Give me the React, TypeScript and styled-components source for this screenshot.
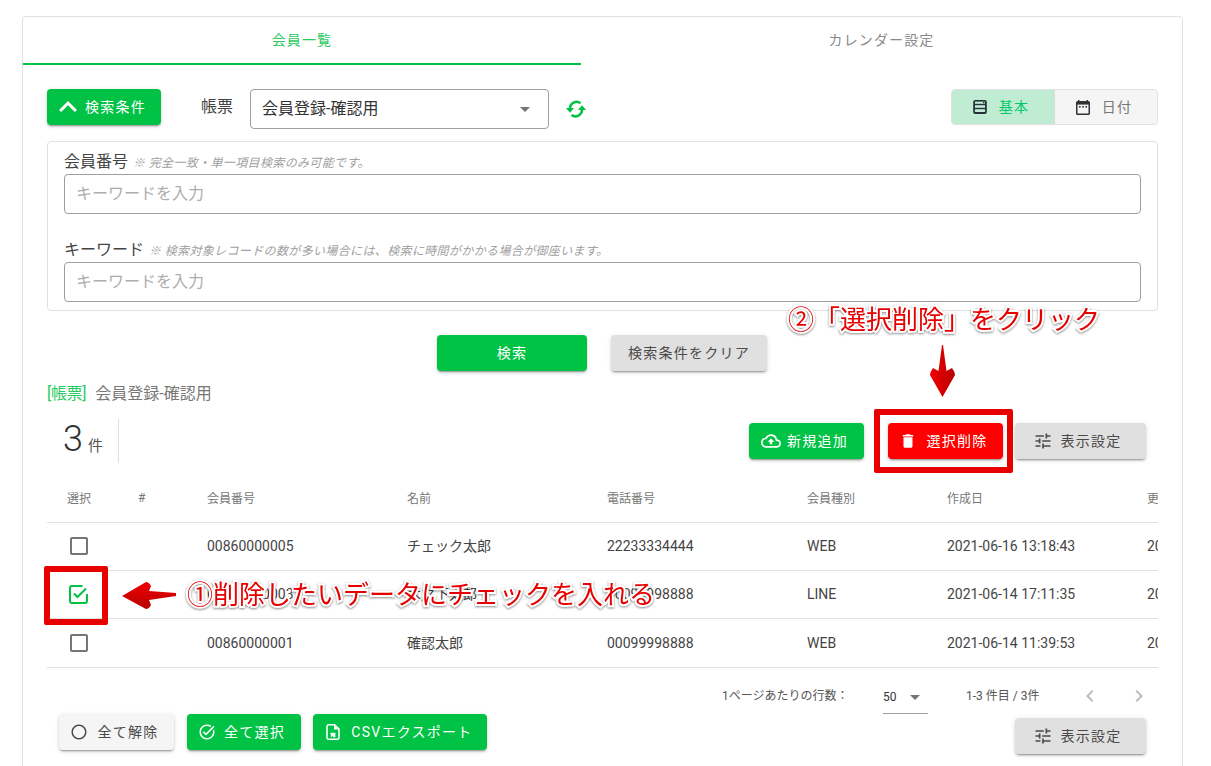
import React from "react";
import styled, { createGlobalStyle } from "styled-components";
import {
  MdKeyboardArrowUp,
  MdArrowDropDown,
  MdOutlineCloudUpload,
  MdDelete,
  MdTune,
  MdCheckBoxOutlineBlank,
  MdChevronLeft,
  MdChevronRight,
  MdRadioButtonUnchecked,
  MdTaskAlt,
} from "react-icons/md";

const GREEN = "#00c245";
const FONT = `Roboto, "Noto Sans CJK JP", sans-serif`;

const Global = createGlobalStyle`
  html, body { margin: 0; padding: 0; background: #fff; overflow: hidden; }
  * { box-sizing: border-box; }
  body { font-family: ${FONT}; color: #333; }
`;

const Page = styled.div`
  position: relative;
  width: 1211px;
  height: 766px;
  overflow: hidden;
  padding: 16px 29px 0 22px;
`;
const Card = styled.div`
  width: 1161px;
  border: 1px solid #e0e0e0;
  border-radius: 4px;
  padding-bottom: 24px;
`;
const Tabs = styled.div`
  display: flex;
  height: 48px;
`;
const Tab = styled.div<{ $active?: boolean; $w: number }>`
  width: ${(p) => p.$w}px;
  display: flex;
  align-items: center;
  justify-content: center;
  padding-bottom: 2px;
  font-size: 14px;
  letter-spacing: 0.08em;
  color: ${(p) => (p.$active ? "#2bca62" : "#8a8a8a")};
  border-bottom: 2px solid ${(p) => (p.$active ? GREEN : "transparent")};
`;
const Content = styled.div`
  padding: 24px 24px 0 24px;
`;
const TopRow = styled.div`
  display: flex;
  align-items: flex-start;
  height: 40px;
`;
const Btn = styled.div<{
  $w: number;
  $v?: "green" | "red" | "grey" | "light";
  $gap?: number;
  $pr?: number;
}>`
  width: ${(p) => p.$w}px;
  height: 36px;
  flex: none;
  display: flex;
  align-items: center;
  justify-content: center;
  gap: ${(p) => p.$gap ?? 8}px;
  padding: 0 ${(p) => p.$pr ?? 0}px 2px 0;
  border-radius: 4px;
  font-size: 14px;
  letter-spacing: 0.09em;
  white-space: nowrap;
  box-shadow: 0 3px 1px -2px rgba(0, 0, 0, 0.2), 0 2px 2px 0 rgba(0, 0, 0, 0.14), 0 1px 5px 0 rgba(0, 0, 0, 0.12);
  background: ${(p) =>
    p.$v === "red" ? "#ff0000" : p.$v === "grey" ? "#e0e0e0" : p.$v === "light" ? "#f5f5f5" : GREEN};
  color: ${(p) => (p.$v === "grey" || p.$v === "light" ? "#4a4a4a" : "#fff")};
  svg { flex: none; margin-bottom: -2px; }
`;
const ChevronSlot = styled.span`
  width: 18px;
  height: 18px;
  display: flex;
  align-items: center;
  justify-content: center;
  margin-bottom: -2px;
  svg { margin: 0; }
`;
const SelectLabel = styled.div`
  margin-left: 40px;
  width: 49px;
  font-size: 16px;
  line-height: 36px;
  color: #444;
`;
const SelectBox = styled.div`
  width: 299px;
  height: 40px;
  border: 1px solid #9e9e9e;
  border-radius: 4px;
  padding: 0 12px 5px 11px;
  display: flex;
  align-items: center;
  justify-content: space-between;
  font-size: 16px;
  color: #333;
  svg { color: #757575; margin-bottom: -5px; }
`;
const RefreshWrap = styled.div`
  margin-left: 16px;
  height: 40px;
  display: flex;
  align-items: center;
  color: ${GREEN};
`;
const Toggle = styled.div`
  margin-left: auto;
  display: flex;
  height: 36px;
  border: 1px solid #e0e0e0;
  border-radius: 4px;
  overflow: hidden;
`;
const ToggleItem = styled.div<{ $active?: boolean; $w: number }>`
  width: ${(p) => p.$w}px;
  display: flex;
  align-items: center;
  justify-content: center;
  gap: 11px;
  padding: 0 5px 2px 0;
  font-size: 14px;
  letter-spacing: 0.09em;
  background: ${(p) => (p.$active ? "#c1ecd4" : "#f5f5f5")};
  color: ${(p) => (p.$active ? "#00c86a" : "#777")};
  border-right: ${(p) => (p.$active ? "1px solid #dcdcdc" : "none")};
  svg { margin-bottom: -2px; }
`;
const Panel = styled.div`
  margin-top: 12px;
  height: 170px;
  border: 1px solid #e0e0e0;
  border-radius: 4px;
  padding: 7px 16px 8px;
  display: flex;
  flex-direction: column;
  gap: 23px;
`;
const Field = styled.div``;
const FieldLabel = styled.div`
  display: flex;
  align-items: baseline;
  gap: 5px;
  height: 25px;
  line-height: 25px;
  font-size: 16px;
  color: #444;
`;
const Note = styled.span`
  font-size: 12px;
  letter-spacing: 0.03em;
  font-style: italic;
  color: #a0a0a0;
`;
const Input = styled.div`
  height: 40px;
  border: 1px solid #9e9e9e;
  border-radius: 4px;
  padding: 0 11px 4px;
  display: flex;
  align-items: center;
  font-size: 16px;
  color: #adadad;
`;
const SearchRow = styled.div`
  margin-top: 24px;
  padding-right: 1px;
  display: flex;
  justify-content: center;
  gap: 24px;
`;
const ReportTitle = styled.div`
  margin-top: 13px;
  height: 20px;
  line-height: 20px;
  font-size: 16px;
  color: #777;
  display: flex;
  gap: 9px;
`;
const ReportTag = styled.span`
  color: #2bca62;
  letter-spacing: -0.02em;
`;
const CountRow = styled.div`
  margin-top: 15px;
  height: 44px;
  display: flex;
  align-items: center;
`;
const Count = styled.div`
  width: 72px;
  height: 44px;
  padding-left: 16px;
  border-right: 1px solid #e0e0e0;
  display: flex;
  align-items: baseline;
  gap: 5px;
  font-size: 36px;
  font-weight: 300;
  line-height: 41px;
  color: #333;
  span { font-size: 15px; font-weight: 400; color: #555; }
`;
const Actions = styled.div`
  margin-left: auto;
  margin-right: 12px;
  display: flex;
`;
const TableWrap = styled.div`
  margin-top: 12px;
  overflow: hidden;
`;
const Row = styled.div<{ $h: number }>`
  display: grid;
  grid-template-columns: 91px 69px 200px 200px 200px 140px 200px 200px;
  height: ${(p) => p.$h}px;
  width: 1300px;
  align-items: center;
  padding-bottom: 1px;
  border-bottom: 1px solid #e0e0e0;
`;
const RowClip = styled.div`
  width: 1111px;
  overflow: hidden;
`;
const HeadCell = styled.div<{ $pl?: number }>`
  font-size: 12px;
  color: #777;
  padding-left: ${(p) => p.$pl ?? 0}px;
  padding-bottom: 1px;
`;
const Cell = styled.div<{ $cjk?: boolean }>`
  font-size: 14px;
  color: #444;
  white-space: nowrap;
  padding-bottom: ${(p) => (p.$cjk ? 2 : 0)}px;
`;
const CheckCell = styled.div<{ $on?: boolean }>`
  padding-left: ${(p) => (p.$on ? 19 : 20)}px;
  height: 24px;
  color: ${(p) => (p.$on ? GREEN : "#757575")};
  svg { display: block; }
`;
const Pager = styled.div`
  height: 46px;
  display: flex;
  align-items: flex-start;
  font-size: 12px;
  color: #555;
  padding-left: 675px;
`;
const PagerLabel = styled.div`
  width: 161px;
  line-height: 57px;
`;
const PagerSelect = styled.div`
  width: 45px;
  height: 46px;
  border-bottom: 1px solid #9e9e9e;
  display: flex;
  align-items: center;
  justify-content: space-between;
  padding-top: 13px;
  color: #333;
  svg { color: #757575; margin-right: 1px; }
`;
const PagerRange = styled.div`
  margin-left: 38px;
  width: 112px;
  line-height: 57px;
`;
const PagerNav = styled.div`
  display: flex;
  gap: 25px;
  padding-top: 16px;
  color: #bdbdbd;
`;
const BottomRow = styled.div`
  display: flex;
  align-items: flex-start;
  padding: 0 12px;
`;
const BottomLeft = styled.div`
  display: flex;
  gap: 13px;
`;
const BottomRight = styled.div`
  margin-left: auto;
  margin-top: 4px;
`;
const Highlight = styled.div<{ $x: number; $y: number; $w: number; $h: number }>`
  position: absolute;
  left: ${(p) => p.$x}px;
  top: ${(p) => p.$y}px;
  width: ${(p) => p.$w}px;
  height: ${(p) => p.$h}px;
  border: 6px solid #e60000;
  border-radius: 2px;
`;
const Callout = styled.div<{ $x: number; $y: number }>`
  position: absolute;
  left: ${(p) => p.$x}px;
  top: ${(p) => p.$y}px;
  font-size: 26px;
  line-height: 32px;
  white-space: nowrap;
  color: #e60000;
  -webkit-text-stroke: 4px #fff;
  paint-order: stroke fill;
  filter: drop-shadow(0 1px 1px rgba(0, 0, 0, 0.45));
`;
const ArrowSvg = styled.svg<{ $x: number; $y: number }>`
  position: absolute;
  left: ${(p) => p.$x}px;
  top: ${(p) => p.$y}px;
`;

const SheetIcon = () => (
  <svg width="16" height="16" viewBox="0 0 16 16">
    <rect x="1.2" y="1" width="13.6" height="14" rx="2" fill="#263238" />
    <rect x="3" y="2.6" width="10" height="2.2" fill="#c1ecd4" />
    <rect x="3" y="6.2" width="10" height="2.6" fill="#c1ecd4" />
    <rect x="3" y="10.2" width="10" height="2.8" fill="#c1ecd4" />
    <rect x="11" y="3" width="1.4" height="1.2" fill="#263238" />
  </svg>
);
const CalIcon = () => (
  <svg width="16" height="16" viewBox="0 0 16 16">
    <path d="M3 1h1.5v1h7V1H13v1h.4A1.6 1.6 0 0 1 15 3.6v10.8a1.6 1.6 0 0 1-1.6 1.6H2.6A1.6 1.6 0 0 1 1 14.4V3.6A1.6 1.6 0 0 1 2.6 2H3z" fill="#333" />
    <rect x="2.5" y="5.6" width="11" height="8.9" fill="#f5f5f5" />
    <rect x="4" y="7" width="1.6" height="1.6" fill="#333" />
    <rect x="7.2" y="7" width="1.6" height="1.6" fill="#333" />
    <rect x="10.4" y="7" width="1.6" height="1.6" fill="#333" />
  </svg>
);
const CsvIcon = () => (
  <svg width="18" height="18" viewBox="0 0 18 18" fill="none">
    <path d="M4.5 1.8h6L15 6.2v8.4a1.6 1.6 0 0 1-1.6 1.6H4.6A1.6 1.6 0 0 1 3 14.6V3.4a1.6 1.6 0 0 1 1.5-1.6z" stroke="#fff" strokeWidth="1.6" />
    <path d="M10 2v4.5h4.5L10 2z" fill="#fff" />
    <path d="M6.4 9.8h5v4.4H8.8v-1.7l-1.5 1.4-.9-.9 1.5-1.4H6.4z" fill="#fff" />
  </svg>
);
const RefreshIcon = () => (
  <svg width="22" height="22" viewBox="0 0 22 22" fill="none">
    <path d="M15.5 5.2A6.6 6.6 0 0 0 5 10.5" stroke="currentColor" strokeWidth="2.5" />
    <path d="M1 10h8l-4 4.8z" fill="currentColor" />
    <path d="M6.5 17A6.6 6.6 0 0 0 17 11.5" stroke="currentColor" strokeWidth="2.5" />
    <path d="M13 12h8l-4-4.8z" fill="currentColor" />
  </svg>
);
const CheckedIcon = () => (
  <svg width="24" height="24" viewBox="0 0 24 24" fill="none" stroke="currentColor" strokeWidth="2">
    <path d="M16.5 4H6a2 2 0 0 0-2 2v13a2 2 0 0 0 2 2h13a2 2 0 0 0 2-2v-7" />
    <path d="M8 11.5l3.5 3.5L20 6.5" />
  </svg>
);

const rows = [
  ["00860000005", "チェック太郎", "22233334444", "WEB", "2021-06-16 13:18:43", "2021-06-16 13:18:43"],
  ["00860000003", "木之下太郎", "00099998888", "LINE", "2021-06-14 17:11:35", "2021-06-14 17:11:35"],
  ["00860000001", "確認太郎", "00099998888", "WEB", "2021-06-14 11:39:53", "2021-06-14 11:39:53"],
];

export default function App() {
  return (
    <>
      <Global />
      <Page>
        <Card>
          <Tabs>
            <Tab $active $w={558}>会員一覧</Tab>
            <Tab $w={601}>カレンダー設定</Tab>
          </Tabs>
          <Content>
            <TopRow>
              <Btn $w={114} $gap={8} $pr={3}>
                <ChevronSlot>
                  <MdKeyboardArrowUp size={36} style={{ flex: "none" }} />
                </ChevronSlot>
                検索条件
              </Btn>
              <SelectLabel>帳票</SelectLabel>
              <SelectBox>
                会員登録-確認用
                <MdArrowDropDown size={24} style={{ marginRight: -1 }} />
              </SelectBox>
              <RefreshWrap>
                <RefreshIcon />
              </RefreshWrap>
              <Toggle>
                <ToggleItem $active $w={103}>
                  <SheetIcon />
                  基本
                </ToggleItem>
                <ToggleItem $w={102}>
                  <CalIcon />
                  日付
                </ToggleItem>
              </Toggle>
            </TopRow>
            <Panel>
              <Field>
                <FieldLabel>
                  会員番号 <Note>※ 完全一致・単一項目検索のみ可能です。</Note>
                </FieldLabel>
                <Input>キーワードを入力</Input>
              </Field>
              <Field>
                <FieldLabel>
                  キーワード <Note>※ 検索対象レコードの数が多い場合には、検索に時間がかかる場合が御座います。</Note>
                </FieldLabel>
                <Input>キーワードを入力</Input>
              </Field>
            </Panel>
            <SearchRow>
              <Btn $w={150}>検索</Btn>
              <Btn $w={156} $v="grey">検索条件をクリア</Btn>
            </SearchRow>
            <ReportTitle>
              <ReportTag>[帳票]</ReportTag>
              会員登録-確認用
            </ReportTitle>
            <CountRow>
              <Count>
                3<span>件</span>
              </Count>
              <Actions>
                <Btn $w={115} style={{ marginRight: 24 }} $pr={4} $gap={6}>
                  <MdOutlineCloudUpload size={20} />
                  新規追加
                </Btn>
                <Btn $w={115} $v="red" style={{ marginRight: 12 }} $gap={9} $pr={4}>
                  <MdDelete size={18} />
                  選択削除
                </Btn>
                <Btn $w={131} $v="grey" $pr={6} $gap={7}>
                  <MdTune size={20} />
                  表示設定
                </Btn>
              </Actions>
            </CountRow>
            <TableWrap>
              <RowClip>
                <Row $h={48}>
                  <HeadCell $pl={20}>選択</HeadCell>
                  <HeadCell>#</HeadCell>
                  <HeadCell>会員番号</HeadCell>
                  <HeadCell>名前</HeadCell>
                  <HeadCell>電話番号</HeadCell>
                  <HeadCell>会員種別</HeadCell>
                  <HeadCell>作成日</HeadCell>
                  <HeadCell>更新日</HeadCell>
                </Row>
                {rows.map((r, i) => (
                  <Row $h={i === 2 ? 49 : 48} key={r[0]}>
                    <CheckCell $on={i === 1}>
                      {i === 1 ? <CheckedIcon /> : <MdCheckBoxOutlineBlank size={24} />}
                    </CheckCell>
                    <Cell />
                    {r.map((c, j) => (
                      <Cell key={j} $cjk={j === 1}>{c}</Cell>
                    ))}
                  </Row>
                ))}
              </RowClip>
            </TableWrap>
            <Pager>
              <PagerLabel>1ページあたりの行数：</PagerLabel>
              <PagerSelect>
                50
                <MdArrowDropDown size={24} />
              </PagerSelect>
              <PagerRange>1-3 件目 / 3件</PagerRange>
              <PagerNav>
                <MdChevronLeft size={24} />
                <MdChevronRight size={24} />
              </PagerNav>
            </Pager>
            <BottomRow>
              <BottomLeft>
                <Btn $w={115} $v="light" $pr={4} $gap={9}>
                  <MdRadioButtonUnchecked size={18} />
                  全て解除
                </Btn>
                <Btn $w={114} $pr={5}>
                  <MdTaskAlt size={18} />
                  全て選択
                </Btn>
                <Btn $w={174} style={{ marginLeft: -1 }} $gap={9} $pr={3}>
                  <CsvIcon />
                  CSVエクスポート
                </Btn>
              </BottomLeft>
              <BottomRight>
                <Btn $w={131} $v="grey" $pr={6} $gap={7}>
                  <MdTune size={20} />
                  表示設定
                </Btn>
              </BottomRight>
            </BottomRow>
          </Content>
        </Card>

        <Highlight $x={874} $y={409} $w={139} $h={64} />
        <Highlight $x={44} $y={566} $w={64} $h={59} />
        <Callout $x={788} $y={304}>②「選択削除」をクリック</Callout>
        <Callout $x={187} $y={579}>①削除したいデータにチェックを入れる</Callout>
        <ArrowSvg $x={928} $y={344} width="30" height="56" viewBox="0 0 30 56">
          <defs>
            <linearGradient id="ad" x1="0" x2="1" y1="0" y2="0">
              <stop offset="0" stopColor="#f00000" />
              <stop offset="1" stopColor="#b80000" />
            </linearGradient>
          </defs>
          <path d="M14 1 L15 1 L18.5 27 L24 24 Q27 28 27 31 L14.5 53 L2 31 Q2 28 5 24 L10.5 27 Z" fill="url(#ad)" />
        </ArrowSvg>
        <ArrowSvg $x={121} $y={581} width="56" height="30" viewBox="0 0 56 30">
          <defs>
            <linearGradient id="al" x1="0" x2="0" y1="0" y2="1">
              <stop offset="0" stopColor="#f00000" />
              <stop offset="1" stopColor="#b80000" />
            </linearGradient>
          </defs>
          <path d="M55 12 L55 15 L28 19 L30 24 Q28 28 25 28 L1 15 L25 1 Q28 1 30 5 L28 10 Z" fill="url(#al)" />
        </ArrowSvg>
      </Page>
    </>
  );
}
